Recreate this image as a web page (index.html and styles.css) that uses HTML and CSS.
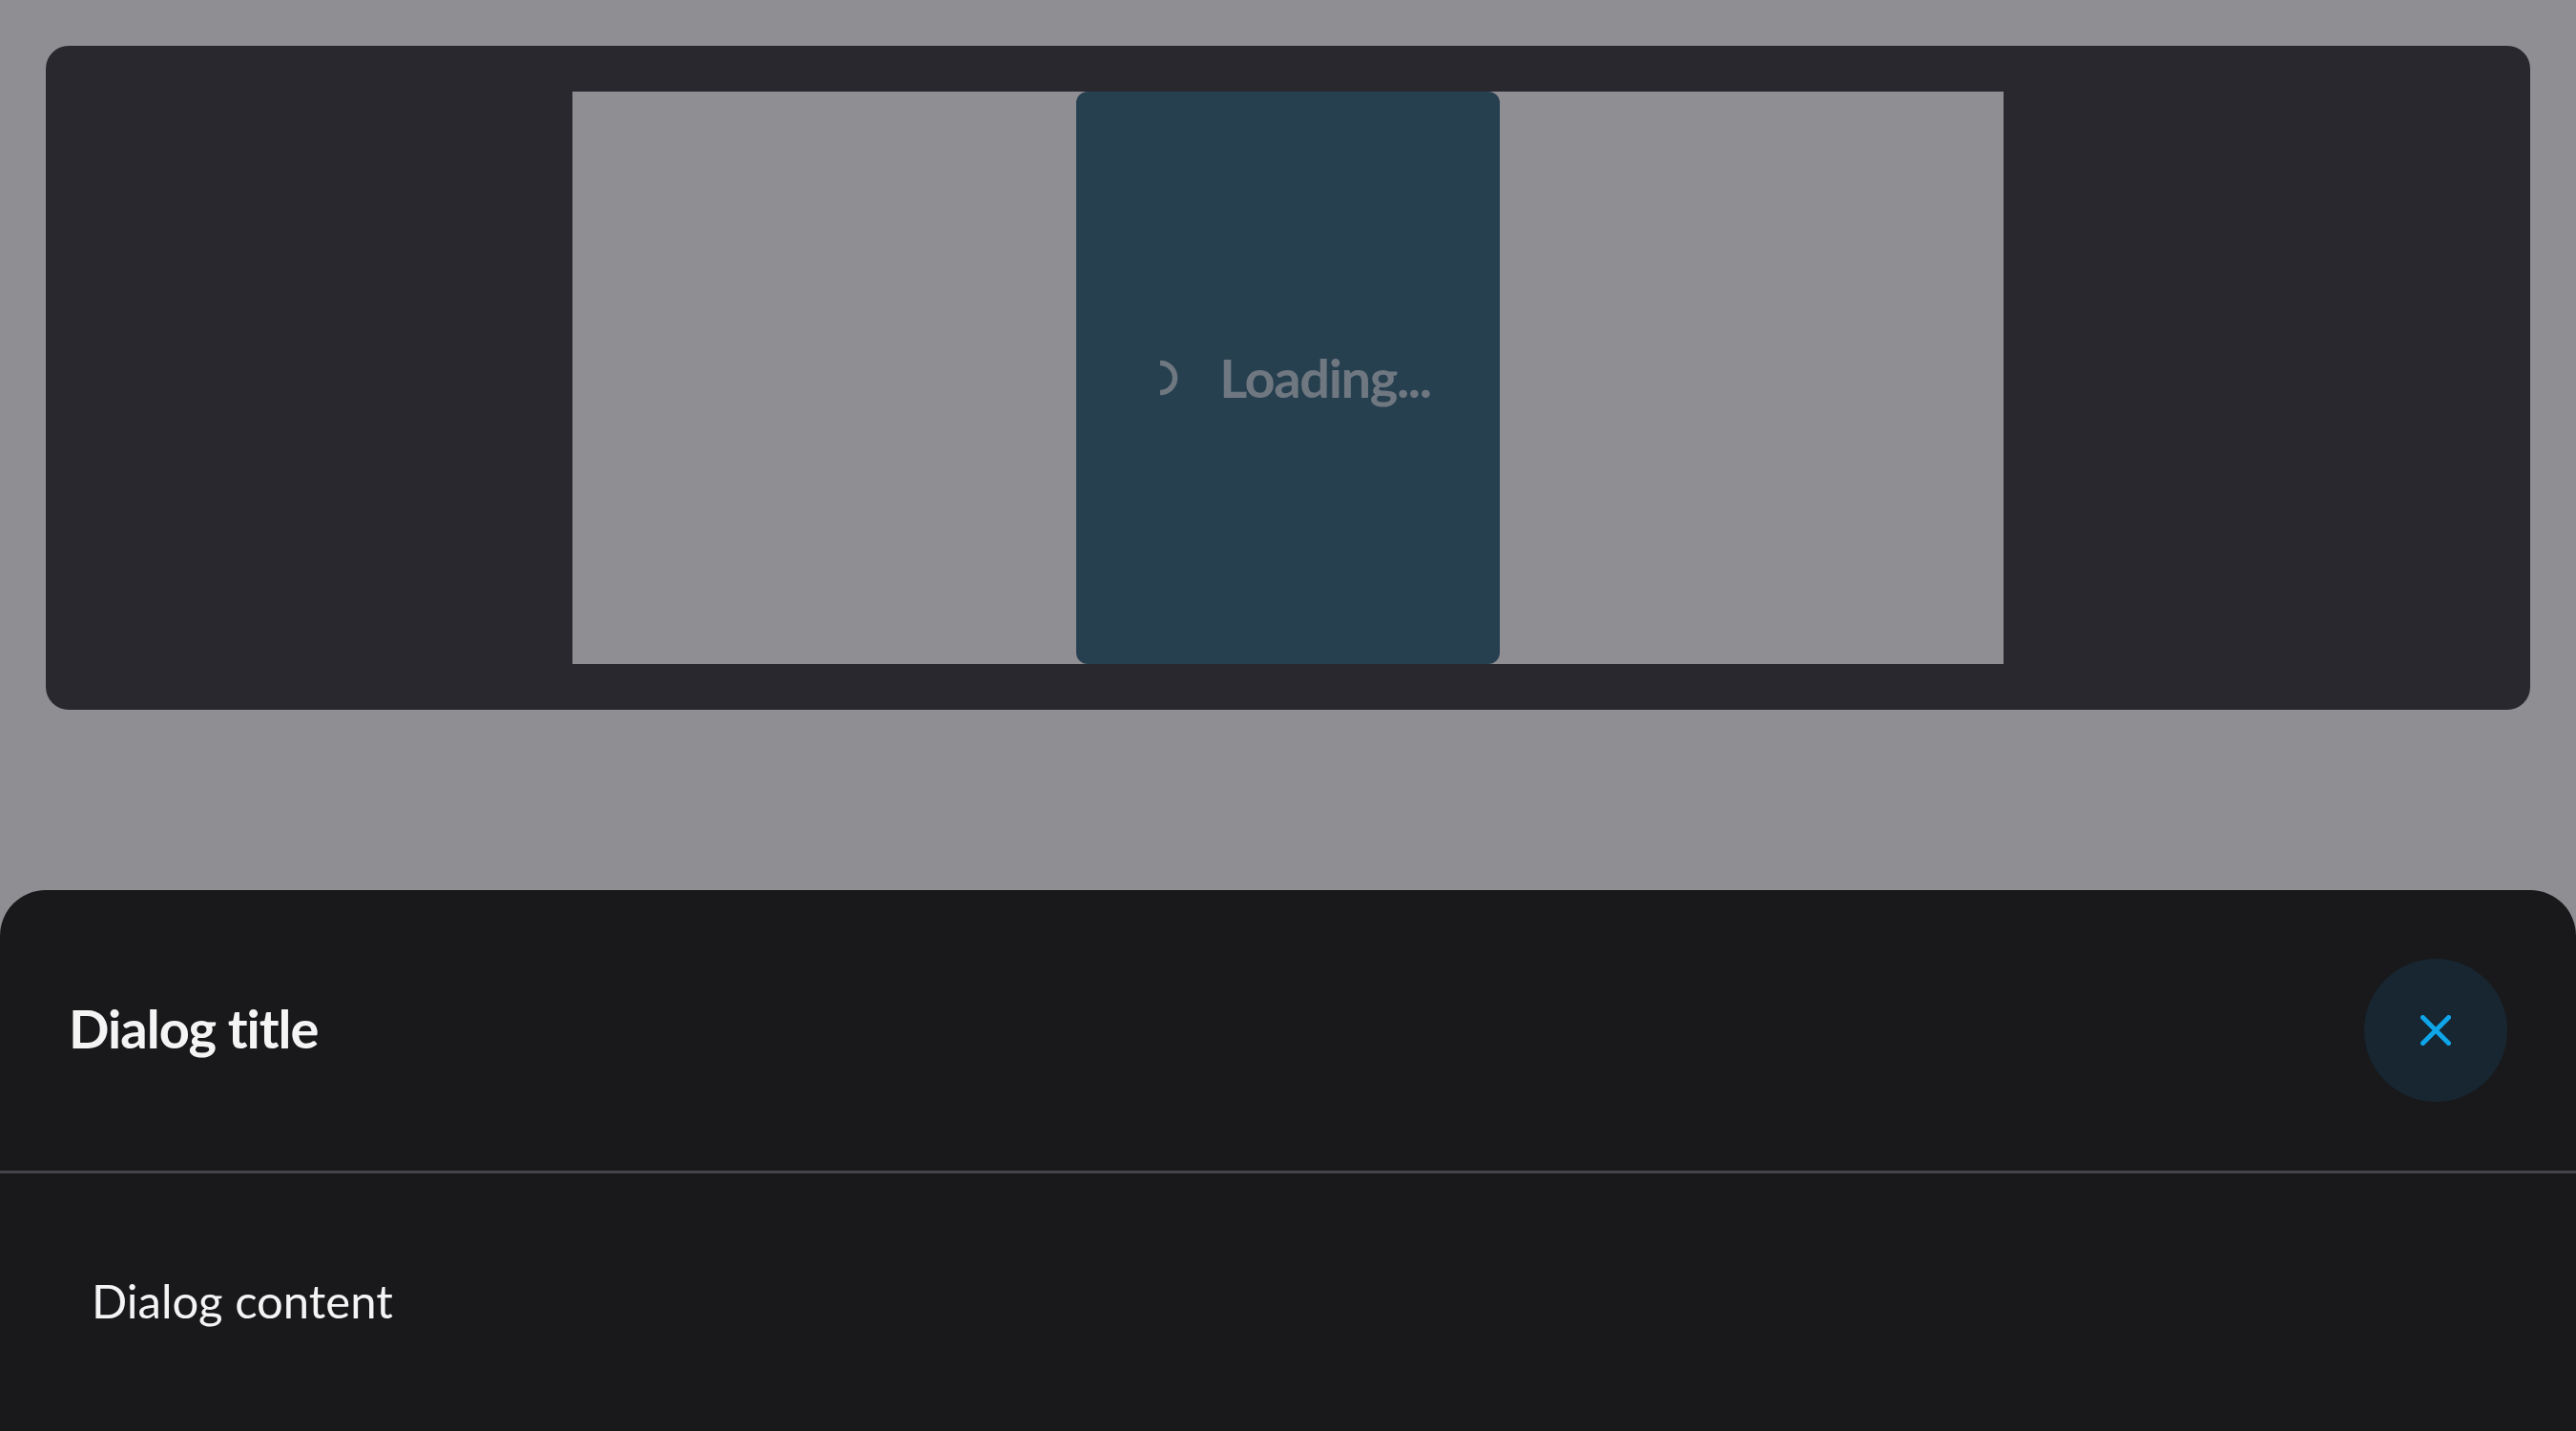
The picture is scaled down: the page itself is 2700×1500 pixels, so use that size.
FILE: index.html
```html
<!DOCTYPE html>
<html lang="en">
<head>
<meta charset="utf-8">
<title>Dialog</title>
<link rel="stylesheet" href="styles.css">
</head>
<body>
  <main class="page">
    <section class="card">
      <div class="stage">
        <div class="loader-panel">
          <div class="loader">
            <svg class="spinner" width="40" height="40" viewBox="0 0 40 40" aria-hidden="true">
              <path d="M20 4.5 A15.5 15.5 0 0 1 20 35.5" fill="none" stroke="#6f7780" stroke-width="5.5"/>
            </svg>
            <span class="loader-text">Loading...</span>
          </div>
        </div>
      </div>
    </section>
  </main>

  <div class="sheet" role="dialog" aria-labelledby="dlg-title">
    <header class="sheet-header">
      <h2 class="sheet-title" id="dlg-title">Dialog title</h2>
      <button class="close-btn" type="button" aria-label="Close">
        <svg width="32" height="32" viewBox="0 0 32 32" aria-hidden="true">
          <path d="M2.5 2.5 L29.5 29.5 M29.5 2.5 L2.5 29.5" fill="none" stroke="#0ea5e9" stroke-width="5" stroke-linecap="round"/>
        </svg>
      </button>
    </header>
    <div class="sheet-divider"></div>
    <div class="sheet-body">
      <p class="sheet-text">Dialog content</p>
    </div>
  </div>
</body>
</html>
```

FILE: styles.css
```css
* {
  box-sizing: border-box;
}

html, body {
  margin: 0;
  padding: 0;
  height: 100%;
}

body {
  background: #8f8e93;
  font-family: Lato, "Noto Sans", sans-serif;
  font-variant-ligatures: none;
  overflow: hidden;
}

.page {
  padding: 48px;
}

.card {
  background: #29282e;
  border-radius: 24px;
  padding: 48px 0;
  display: flex;
  justify-content: center;
}

.stage {
  width: 1500px;
  height: 600px;
  background: #8f8e93;
  display: flex;
  justify-content: center;
}

.loader-panel {
  width: 444px;
  height: 600px;
  background: #274050;
  border-radius: 12px;
  display: flex;
  align-items: center;
  justify-content: center;
}

.loader {
  display: flex;
  align-items: center;
  gap: 42px;
  margin-right: 4px;
}

.spinner {
  display: block;
}

.loader-text {
  font-size: 56px;
  font-weight: 700;
  letter-spacing: -0.025em;
  color: #6f7780;
  line-height: 1.2;
}

.sheet {
  position: fixed;
  left: 0;
  right: 0;
  bottom: 0;
  height: 567px;
  background: #19191b;
  border-radius: 48px 48px 0 0;
  display: flex;
  flex-direction: column;
}

.sheet-header {
  display: flex;
  align-items: center;
  justify-content: space-between;
  padding: 72px;
}

.sheet-title {
  margin: 0;
  font-size: 56px;
  font-weight: 700;
  letter-spacing: -0.018em;
  color: #f4f4f5;
  line-height: 1.2;
  position: relative;
  top: -2px;
}

.close-btn {
  width: 150px;
  height: 150px;
  border: none;
  border-radius: 50%;
  background: #172631;
  display: flex;
  align-items: center;
  justify-content: center;
  padding: 0;
  cursor: pointer;
}

.close-btn svg {
  display: block;
}

.sheet-divider {
  height: 3px;
  background: #45444a;
}

.sheet-body {
  padding: 97px 96px;
}

.sheet-text {
  margin: 0;
  font-size: 49px;
  line-height: 1.5;
  color: #f4f4f5;
}
```
